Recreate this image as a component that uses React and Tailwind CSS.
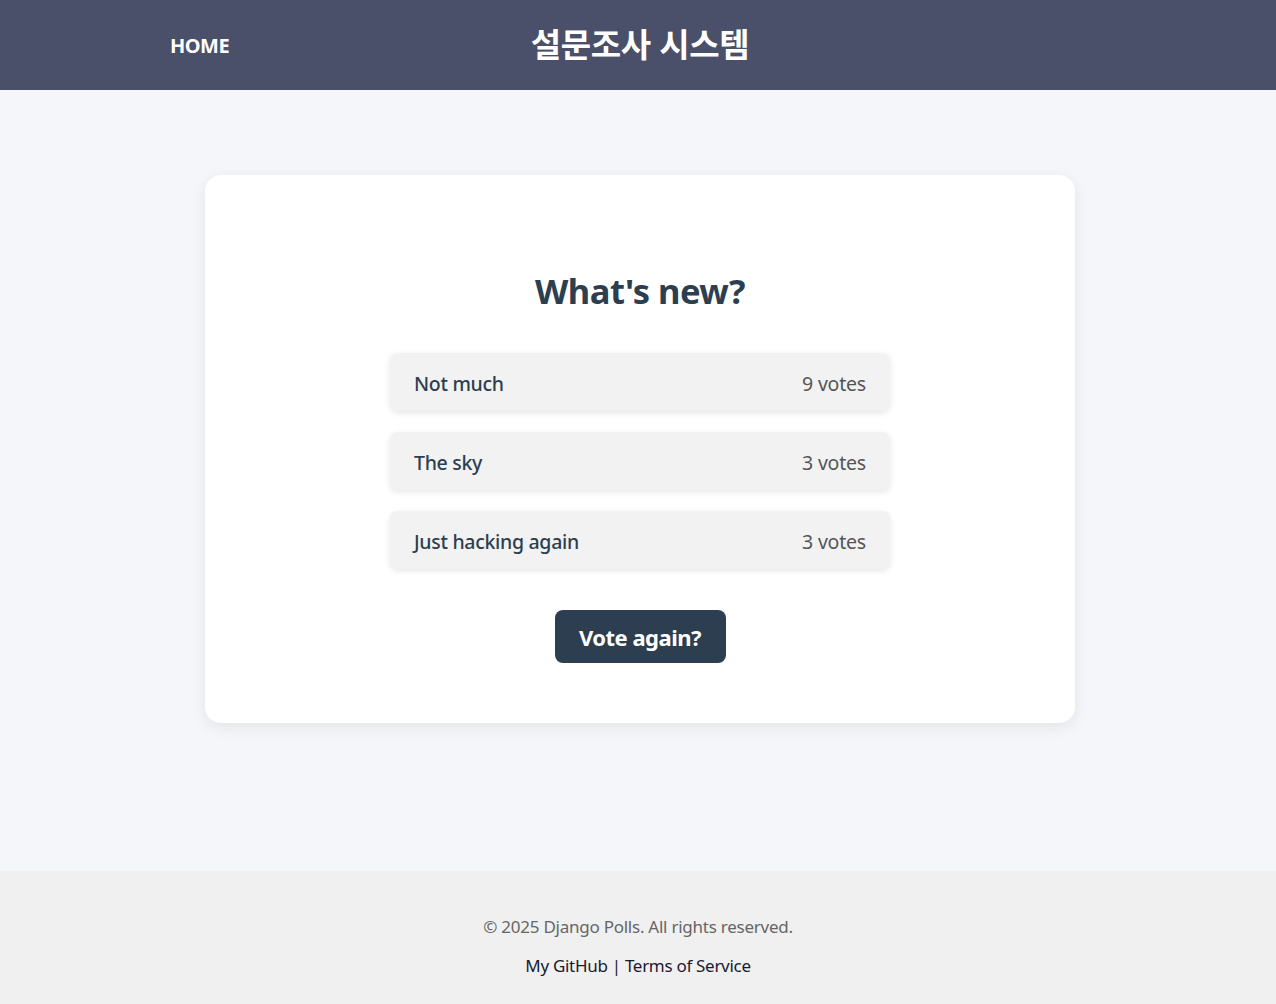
export default function App() {
  const choices = [
    ["Not much", "9 votes"],
    ["The sky", "3 votes"],
    ["Just hacking again", "3 votes"],
  ];
  const font = { fontFamily: '"Noto Sans", "Noto Sans CJK KR", sans-serif' };
  return (
    <div className="min-h-[1004px] flex flex-col bg-[#f5f6fa]" style={font}>
      <header className="h-[90px] bg-[#4a4f6a] flex items-center relative shrink-0">
        <a className="ml-[170px] mt-[2px] text-white font-bold text-[20px] tracking-[-0.5px]">HOME</a>
        <h1 className="absolute left-[calc(50%+2px)] -translate-x-1/2 top-[22px] text-white font-bold text-[33px] leading-[46px] tracking-[-0.3px]">설문조사 시스템</h1>
      </header>
      <main className="flex-1 flex justify-center pl-[4px] pt-[85px] pb-[148px]">
        <div className="w-[870px] h-[548px] bg-white rounded-[16px] shadow-[0_4px_16px_rgba(0,0,0,0.08)] flex flex-col items-center pt-[92px]">
          <h2 className="text-[34.5px] leading-[48px] font-bold text-[#2c3e50] tracking-[-0.5px]">What's new?</h2>
          <div className="mt-[38px] w-[500px] flex flex-col gap-[21px]">
            {choices.map(([c, v]) => (
              <div key={c} className="h-[58px] bg-[#f2f2f2] rounded-[8px] shadow-[0_2px_6px_rgba(0,0,0,0.1)] flex items-center justify-between px-[24px] pt-[4px]">
                <span className="text-[19.5px] font-medium text-[#2c3e50] tracking-[-0.3px]">{c}</span>
                <span className="text-[19.5px] text-[#555] tracking-[-0.2px]">{v}</span>
              </div>
            ))}
          </div>
          <button className="mt-[41px] w-[171px] h-[53px] bg-[#2c3e50] rounded-[8px] text-white font-bold text-[22px] tracking-[-0.5px] pt-[2px]">Vote again?</button>
        </div>
      </main>
      <footer className="h-[133px] bg-[#f0f0f0] flex flex-col items-center pt-[44px] shrink-0">
        <p className="text-[17px] leading-[24px] text-[#666] tracking-[-0.25px]">© 2025 Django Polls. All rights reserved.</p>
        <p className="mt-[15px] text-[17px] leading-[24px] text-[#1a1a2e] tracking-[-0.3px]">
          <a>My GitHub</a> | <a>Terms of Service</a>
        </p>
      </footer>
    </div>
  );
}
